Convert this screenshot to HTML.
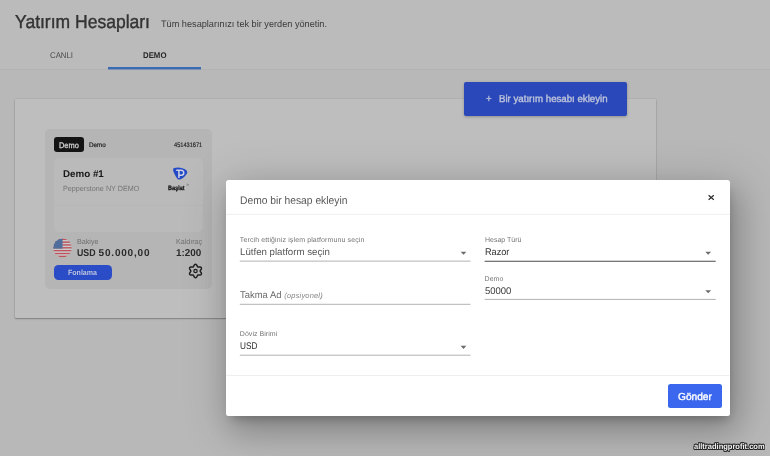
<!DOCTYPE html>
<html lang="tr">
<head>
<meta charset="utf-8">
<title>Yatırım Hesapları</title>
<style>
*{margin:0;padding:0;box-sizing:border-box}
html,body{width:770px;height:456px;overflow:hidden}
body{position:relative;will-change:transform;background:#b8b8b8;font-family:"Liberation Sans",sans-serif}
.t{position:absolute;transform-origin:0 50%;text-rendering:geometricPrecision;white-space:nowrap;line-height:1;font-family:"Liberation Sans",sans-serif}
.abs{position:absolute}
.hdr{left:0;top:0;width:770px;height:69.6px;background:#bbb;border-bottom:1px solid #b3b3b3}
.tabline{left:108px;top:67px;width:93px;height:3px;background:linear-gradient(#3a6ab4 0,#3a6ab4 2px,rgba(58,106,180,.45) 2px,rgba(58,106,180,.45) 3px)}
.panel{left:15px;top:99px;width:640.7px;height:218.8px;background:#bebebe;border-radius:1px;box-shadow:0 1px 1.6px rgba(0,0,0,.29),0 0 1.6px rgba(0,0,0,.2)}
.card{left:45px;top:129px;width:166.5px;height:159.5px;background:#b5b5b5;border-radius:5px}
.badge{left:53.6px;top:137.3px;width:30.3px;height:15px;background:#141414;border-radius:3px}
.inner{left:54px;top:158.2px;width:148.5px;height:73.5px;background:#bababa;border-radius:5px}
.innerline{left:54px;top:204.6px;width:148.5px;height:1px;background:#b6b6b6}
.fon{left:53.5px;top:264.5px;width:58.3px;height:15px;background:#2a4cc6;border-radius:4.5px}
.addbtn{left:464.3px;top:82px;width:162.3px;height:33.7px;background:#2a48ba;border-radius:2px;box-shadow:0 1px 3px rgba(0,0,0,.25)}
.modal{left:226px;top:179.6px;width:503.7px;height:236px;background:#fff;border-radius:2.5px;box-shadow:2px 7px 10px -4px rgba(0,0,0,.24),5px 14px 30px 2px rgba(0,0,0,.16),6px 9px 46px 7px rgba(0,0,0,.16)}
.gonder{left:667.6px;top:384.2px;width:54.2px;height:24.1px;background:#3a67ee;border-radius:2.5px}

</style>
</head>
<body>
<div class="abs hdr"></div>
<div class="abs tabline"></div>
<div class="abs panel"></div>
<div class="abs card"></div>
<div class="abs badge"></div>
<div class="abs inner"></div>
<div class="abs innerline"></div>
<div class="abs fon"></div>
<div class="abs addbtn"></div>
<div class="abs modal"></div>
<div class="abs gonder"></div>
<svg class="abs" style="left:0;top:0" width="770" height="456" viewBox="0 0 770 456"><path d="M200.20,271.00 L200.27,270.69 L200.45,270.35 L200.72,269.96 L201.01,269.52 L201.26,269.04 L201.42,268.55 L201.44,268.07 L201.30,267.65 L201.01,267.32 L200.58,267.10 L200.07,266.99 L199.53,266.97 L199.01,267.00 L198.54,267.04 L198.15,267.03 L197.85,266.93 L197.61,266.72 L197.41,266.39 L197.21,265.96 L196.98,265.49 L196.69,265.03 L196.34,264.65 L195.93,264.39 L195.50,264.30 L195.07,264.39 L194.66,264.65 L194.31,265.03 L194.02,265.49 L193.79,265.96 L193.59,266.39 L193.39,266.72 L193.15,266.93 L192.85,267.03 L192.46,267.04 L191.99,267.00 L191.47,266.97 L190.93,266.99 L190.42,267.10 L189.99,267.32 L189.70,267.65 L189.56,268.07 L189.58,268.55 L189.74,269.04 L189.99,269.52 L190.28,269.96 L190.55,270.35 L190.73,270.69 L190.80,271.00 L190.73,271.31 L190.55,271.65 L190.28,272.04 L189.99,272.48 L189.74,272.96 L189.58,273.45 L189.56,273.93 L189.70,274.35 L189.99,274.68 L190.42,274.90 L190.93,275.01 L191.47,275.03 L191.99,275.00 L192.46,274.96 L192.85,274.97 L193.15,275.07 L193.39,275.28 L193.59,275.61 L193.79,276.04 L194.02,276.51 L194.31,276.97 L194.66,277.35 L195.07,277.61 L195.50,277.70 L195.93,277.61 L196.34,277.35 L196.69,276.97 L196.98,276.51 L197.21,276.04 L197.41,275.61 L197.61,275.28 L197.85,275.07 L198.15,274.97 L198.54,274.96 L199.01,275.00 L199.53,275.03 L200.07,275.01 L200.58,274.90 L201.01,274.68 L201.30,274.35 L201.44,273.93 L201.42,273.45 L201.26,272.96 L201.01,272.48 L200.72,272.04 L200.45,271.65 L200.27,271.31 Z" fill="none" stroke="#1f1f1f" stroke-width="1.5" stroke-linejoin="round"/><circle cx="195.5" cy="271.0" r="1.65" fill="none" stroke="#1f1f1f" stroke-width="1.3"/>
<path d="M173.6,168.2 Q179,166.2 185,169.2 Q188,171 187,173.5 Q183.5,178.6 180,179.5 Q177.8,180 177,178.3 Q173.5,173 173.1,170 Q172.9,168.6 173.6,168.2 Z" fill="#2349c6"/>
<path d="M176.2,170.3 H181.3 A2.45,2.45 0 0 1 181.3,175.2 H179.2 M178.9,170.3 V177.9" fill="none" stroke="#cdd2e6" stroke-width="1.5"/>
<path d="M186.6,184.2 H188.3 V185.9 M188.3,184.2 L186.5,186" fill="none" stroke="#777" stroke-width="0.55"/>
<defs><clipPath id="fc"><circle cx="62.5" cy="247.9" r="9.3"/></clipPath></defs>
<g clip-path="url(#fc)"><rect x="53.20" y="238.600" width="18.60" height="1.451" fill="#c24f5a"/><rect x="53.20" y="240.031" width="18.60" height="1.451" fill="#c9c9c9"/><rect x="53.20" y="241.462" width="18.60" height="1.451" fill="#c24f5a"/><rect x="53.20" y="242.892" width="18.60" height="1.451" fill="#c9c9c9"/><rect x="53.20" y="244.323" width="18.60" height="1.451" fill="#c24f5a"/><rect x="53.20" y="245.754" width="18.60" height="1.451" fill="#c9c9c9"/><rect x="53.20" y="247.185" width="18.60" height="1.451" fill="#c24f5a"/><rect x="53.20" y="248.615" width="18.60" height="1.451" fill="#c9c9c9"/><rect x="53.20" y="250.046" width="18.60" height="1.451" fill="#c24f5a"/><rect x="53.20" y="251.477" width="18.60" height="1.451" fill="#c9c9c9"/><rect x="53.20" y="252.908" width="18.60" height="1.451" fill="#c24f5a"/><rect x="53.20" y="254.338" width="18.60" height="1.451" fill="#c9c9c9"/><rect x="53.20" y="255.769" width="18.60" height="1.451" fill="#c24f5a"/><rect x="53.20" y="238.60" width="9.30" height="10.015" fill="#506e9c"/></g>
<path d="M708.6,195.2 L713.8,199.8 M713.8,195.2 L708.6,199.8" fill="none" stroke="#2b2b2b" stroke-width="1.2"/>
<path d="M460.6,251.7 h5.8 l-2.9,3.1 Z" fill="#6c6c6c"/>
<path d="M705.3,251.7 h5.8 l-2.9,3.1 Z" fill="#6c6c6c"/>
<path d="M705.3,290.2 h5.8 l-2.9,3.1 Z" fill="#6c6c6c"/>
<path d="M460.6,345.8 h5.8 l-2.9,3.1 Z" fill="#6c6c6c"/>
<rect x="226" y="213.80" width="503.7" height="1" fill="#eee"/>
<rect x="226" y="374.90" width="503.7" height="1" fill="#eee"/>
<rect x="239.8" y="260.60" width="230.7" height="1" fill="#b2b2b2"/>
<rect x="484.6" y="260.70" width="231.1" height="1.2" fill="#6a6a6a"/>
<rect x="484.6" y="298.90" width="231.1" height="1" fill="#b2b2b2"/>
<rect x="239.8" y="303.80" width="230.7" height="1" fill="#b2b2b2"/>
<rect x="239.8" y="354.70" width="230.7" height="1" fill="#b2b2b2"/>
</svg>

<span id="t_title" class="t" style="left:15.00px;top:12.89px;font-size:18.8px;color:#333;transform:scaleX(0.9327);-webkit-text-stroke:.4px #333;">Yatırım Hesapları</span>
<span id="t_sub" class="t" style="left:160.50px;top:20.26px;font-size:9.5px;color:#3a3a3a;transform:scaleX(0.9642);">Tüm hesaplarınızı tek bir yerden yönetin.</span>
<span id="t_canli" class="t" style="left:50.00px;top:50.67px;font-size:8.3px;color:#4a4a4a;transform:scaleX(0.9412);">CANLI</span>
<span id="t_demo" class="t" style="left:143.00px;top:50.67px;font-size:8.3px;font-weight:700;color:#262626;transform:scaleX(0.9435);">DEMO</span>
<span id="t_badge" class="t" style="left:58.90px;top:141.73px;font-size:8px;color:#d2d2d2;transform:scaleX(0.9277);-webkit-text-stroke:.3px #d2d2d2;">Demo</span>
<span id="t_badge2" class="t" style="left:88.90px;top:142.70px;font-size:6.5px;color:#222;transform:scaleX(0.9686);-webkit-text-stroke:.2px #222;">Demo</span>
<span id="t_num" class="t" style="left:174.30px;top:142.70px;font-size:6.5px;color:#2a2a2a;transform:scaleX(0.8664);-webkit-text-stroke:.2px #2a2a2a;">451431671</span>
<span id="t_name" class="t" style="left:62.90px;top:169.50px;font-size:9.8px;font-weight:700;color:#181818;transform:scaleX(0.9989);">Demo #1</span>
<span id="t_broker" class="t" style="left:62.90px;top:184.85px;font-size:7.5px;color:#767676;transform:scaleX(0.9612);">Pepperstone NY DEMO</span>
<span id="t_baslat" class="t" style="left:167.50px;top:185.55px;font-size:6.2px;color:#1c1c1c;transform:scaleX(0.9591);-webkit-text-stroke:.35px #1c1c1c;">Başlat</span>
<span id="t_bakiye" class="t" style="left:76.90px;top:238.44px;font-size:7.4px;color:#6e6e6e;transform:scaleX(0.9690);">Bakiye</span>
<span id="t_cur" class="t" style="left:76.90px;top:248.84px;font-size:10px;font-weight:700;color:#2a2a2a;transform:scaleX(0.8805);">USD</span>
<span id="t_bal" class="t" style="left:98.60px;top:248.84px;font-size:10px;font-weight:700;color:#2a2a2a;letter-spacing:0.800px;">50.000,00</span>
<span id="t_kald" class="t" style="left:176.00px;top:238.44px;font-size:7.4px;color:#6e6e6e;transform:scaleX(0.9585);">Kaldıraç</span>
<span id="t_lev" class="t" style="left:176.00px;top:248.84px;font-size:10px;font-weight:700;color:#2a2a2a;transform:scaleX(0.9891);">1:200</span>
<span id="t_fon" class="t" style="left:68.20px;top:269.27px;font-size:7.6px;font-weight:700;color:#bcc3de;transform:scaleX(0.9253);">Fonlama</span>
<span id="t_plus" class="t" style="left:485.50px;top:94.41px;font-size:10.5px;color:#bcc2da;transform:scaleX(0.9120);-webkit-text-stroke:.3px #bcc2da;">+</span>
<span id="t_add" class="t" style="left:499.00px;top:94.83px;font-size:10px;color:#bcc2da;transform:scaleX(0.9673);-webkit-text-stroke:.4px #bcc2da;">Bir yatırım hesabı ekleyin</span>
<span id="t_mtitle" class="t" style="left:240.00px;top:196.19px;font-size:11px;color:#575757;transform:scaleX(0.9343);">Demo bir hesap ekleyin</span>
<span id="t_l1" class="t" style="left:239.80px;top:237.47px;font-size:7px;color:#757575;letter-spacing:0.122px;">Tercih ettiğiniz işlem platformunu seçin</span>
<span id="t_v1" class="t" style="left:239.80px;top:247.69px;font-size:9.7px;color:#555;transform:scaleX(0.9985);">Lütfen platform seçin</span>
<span id="t_l2" class="t" style="left:484.60px;top:237.47px;font-size:7px;color:#757575;transform:scaleX(0.9985);">Hesap Türü</span>
<span id="t_v2" class="t" style="left:484.60px;top:247.69px;font-size:9.7px;color:#2e2e2e;transform:scaleX(0.9441);">Razor</span>
<span id="t_takma" class="t" style="left:239.80px;top:291.39px;font-size:9.7px;color:#6a6a6a;transform:scaleX(0.9754);">Takma Ad</span>
<span id="t_ops" class="t" style="left:284.30px;top:292.25px;font-size:7.5px;color:#858585;letter-spacing:0.171px;font-style:italic;">(opsiyonel)</span>
<span id="t_l3" class="t" style="left:484.60px;top:276.07px;font-size:7px;color:#757575;letter-spacing:0.004px;">Demo</span>
<span id="t_v3" class="t" style="left:484.60px;top:287.49px;font-size:9.7px;color:#3a3a3a;transform:scaleX(0.9795);">50000</span>
<span id="t_l4" class="t" style="left:239.80px;top:331.27px;font-size:7px;color:#757575;letter-spacing:0.050px;">Döviz Birimi</span>
<span id="t_v4" class="t" style="left:239.80px;top:341.59px;font-size:9.7px;color:#2e2e2e;transform:scaleX(0.8501);">USD</span>
<span id="t_gonder" class="t" style="left:677.90px;top:392.57px;font-size:10.2px;color:#fff;transform:scaleX(0.9975);-webkit-text-stroke:.35px #fff;">Gönder</span>
<span id="t_wm" class="t" style="left:693.80px;top:442.53px;font-size:8px;font-weight:700;color:#f4f4f4;transform:scaleX(0.9398);text-shadow:-.7px -.7px 0 #222,.7px -.7px 0 #222,-.7px .7px 0 #222,.7px .7px 0 #222,0 .8px 0 #222,0 -.8px 0 #222,.8px 0 0 #222,-.8px 0 0 #222;">alltradingprofit.com</span>
</body>
</html>
